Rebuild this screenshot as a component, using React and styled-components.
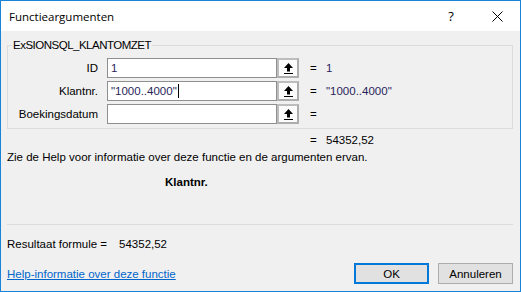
import styled, { createGlobalStyle } from "styled-components"

const GlobalStyle = createGlobalStyle`
  html, body {
    margin: 0;
    padding: 0;
  }
  body {
    font-family: "Liberation Sans", Arial, sans-serif;
    font-size: 11.5px;
    color: #000;
  }
`

const args = [
  { label: "ID", value: "1", result: "1" },
  { label: "Klantnr.", value: "\"1000..4000\"", result: "\"1000..4000\"", focused: true },
  { label: "Boekingsdatum", value: "", result: "" },
]

const RefIcon = () => (
  <svg width="9" height="11" viewBox="0 0 9 11">
    <path d="M4.5 0 L9 5 H6 V8.5 H3 V5 H0 Z" fill="#000" />
    <rect x="0" y="10" width="9" height="1" fill="#000" />
  </svg>
)

const CloseIcon = () => (
  <svg width="11" height="11" viewBox="0 0 11 11">
    <path d="M0.5 0.5 L10.5 10.5 M10.5 0.5 L0.5 10.5" stroke="#000" strokeWidth="1" />
  </svg>
)

const App = () => {
  return (
    <>
      <GlobalStyle />
      <StyledWindow>
        <StyledTitleBar>
          <span className="title">Functieargumenten</span>
          <TitleButton>?</TitleButton>
          <TitleButton><CloseIcon /></TitleButton>
        </StyledTitleBar>

        <StyledBody>
          <StyledGroup>
            <legend>ExSIONSQL_KLANTOMZET</legend>
            <div className="rows">
              {args.map(arg => (
                <ArgRow key={arg.label}>
                  <span className="label">{arg.label}</span>
                  <EditBox>
                    {arg.value}
                    {arg.focused && <Caret />}
                  </EditBox>
                  <RefButton><RefIcon /></RefButton>
                  <span className="eq">=</span>
                  <Value>{arg.result}</Value>
                </ArgRow>
              ))}
            </div>
          </StyledGroup>

          <ResultLine>
            <span className="eq">=</span>
            <span>54352,52</span>
          </ResultLine>

          <Description>Zie de Help voor informatie over deze functie en de argumenten ervan.</Description>
          <ArgName>Klantnr.</ArgName>

          <Separator />

          <Summary>
            <span>Resultaat formule =</span>
            <span className="value">54352,52</span>
          </Summary>

          <Footer>
            <a href="#help">Help-informatie over deze functie</a>
            <DialogButton $primary>OK</DialogButton>
            <DialogButton>Annuleren</DialogButton>
          </Footer>
        </StyledBody>
      </StyledWindow>
    </>
  )
}

export default App

const StyledWindow = styled.div`
  width: 521px;
  height: 292px;
  box-sizing: border-box;
  border: 1px solid #1883d7;
  background: #f0f0f0;
  display: flex;
  flex-direction: column;
`
const StyledTitleBar = styled.div`
  height: 30px;
  background: #fff;
  display: flex;
  align-items: center;
  padding-left: 8px;
  .title {
    flex: 1;
    font-family: "Open Sans", "Noto Sans", sans-serif;
    font-size: 11.5px;
  }
`
const TitleButton = styled.div`
  width: 46px;
  height: 30px;
  display: flex;
  align-items: center;
  justify-content: center;
  font-family: "Open Sans", "Noto Sans", sans-serif;
  font-size: 13px;
`
const StyledBody = styled.div`
  flex: 1;
  display: flex;
  flex-direction: column;
  padding: 6px 7px 0 6px;
`
const StyledGroup = styled.fieldset`
  margin: 0;
  padding: 0 0 4px 0;
  min-width: 0;
  border: 1px solid #dcdcdc;
  legend {
    margin-left: 4px;
    padding: 0 1px;
    line-height: 16px;
    letter-spacing: -0.5px;
  }
  .rows {
    margin-top: 5px;
    display: flex;
    flex-direction: column;
    gap: 3px;
  }
`
const ArgRow = styled.div`
  display: flex;
  align-items: center;
  height: 20px;
  .label {
    width: 90px;
    margin-right: 9px;
    text-align: right;
  }
  .eq {
    width: 16px;
    margin-left: 11px;
  }
`
const EditBox = styled.div`
  width: 170px;
  height: 20px;
  box-sizing: border-box;
  border: 1px solid #8f8f8f;
  background: #fff;
  padding: 0 3px;
  display: flex;
  align-items: center;
  color: #2a1f5c;
`
const Caret = styled.span`
  display: inline-block;
  width: 1px;
  height: 14px;
  margin-left: 1px;
  background: #000;
`
const RefButton = styled.div`
  width: 22px;
  height: 20px;
  box-sizing: border-box;
  border: 2px solid #bdbdbd;
  border-right-color: #adadad;
  border-bottom-color: #adadad;
  background: #fbfbfb;
  display: flex;
  align-items: center;
  justify-content: center;
`
const Value = styled.span`
  color: #2a1f5c;
`
const ResultLine = styled.div`
  margin-top: 3px;
  padding-left: 303px;
  line-height: 16px;
  display: flex;
  .eq {
    width: 16px;
  }
`
const Description = styled.div`
  margin-top: 1px;
  line-height: 16px;
`
const ArgName = styled.div`
  margin-top: 9px;
  padding-left: 158px;
  line-height: 16px;
  font-weight: bold;
`
const Separator = styled.div`
  margin-top: 34px;
  height: 1px;
  background: #dcdcdc;
`
const Summary = styled.div`
  margin-top: 11px;
  line-height: 16px;
  display: flex;
  .value {
    margin-left: 12px;
  }
`
const Footer = styled.div`
  margin-top: 11px;
  height: 21px;
  display: flex;
  align-items: center;
  gap: 9px;
  a {
    flex: 1;
    color: #0066cc;
    text-decoration: underline;
  }
`
const DialogButton = styled.div`
  width: 75px;
  height: 21px;
  box-sizing: border-box;
  border: ${props => props.$primary ? "2px solid #0078d7" : "1px solid #adadad"};
  background: #e1e1e1;
  display: flex;
  align-items: center;
  justify-content: center;
`
